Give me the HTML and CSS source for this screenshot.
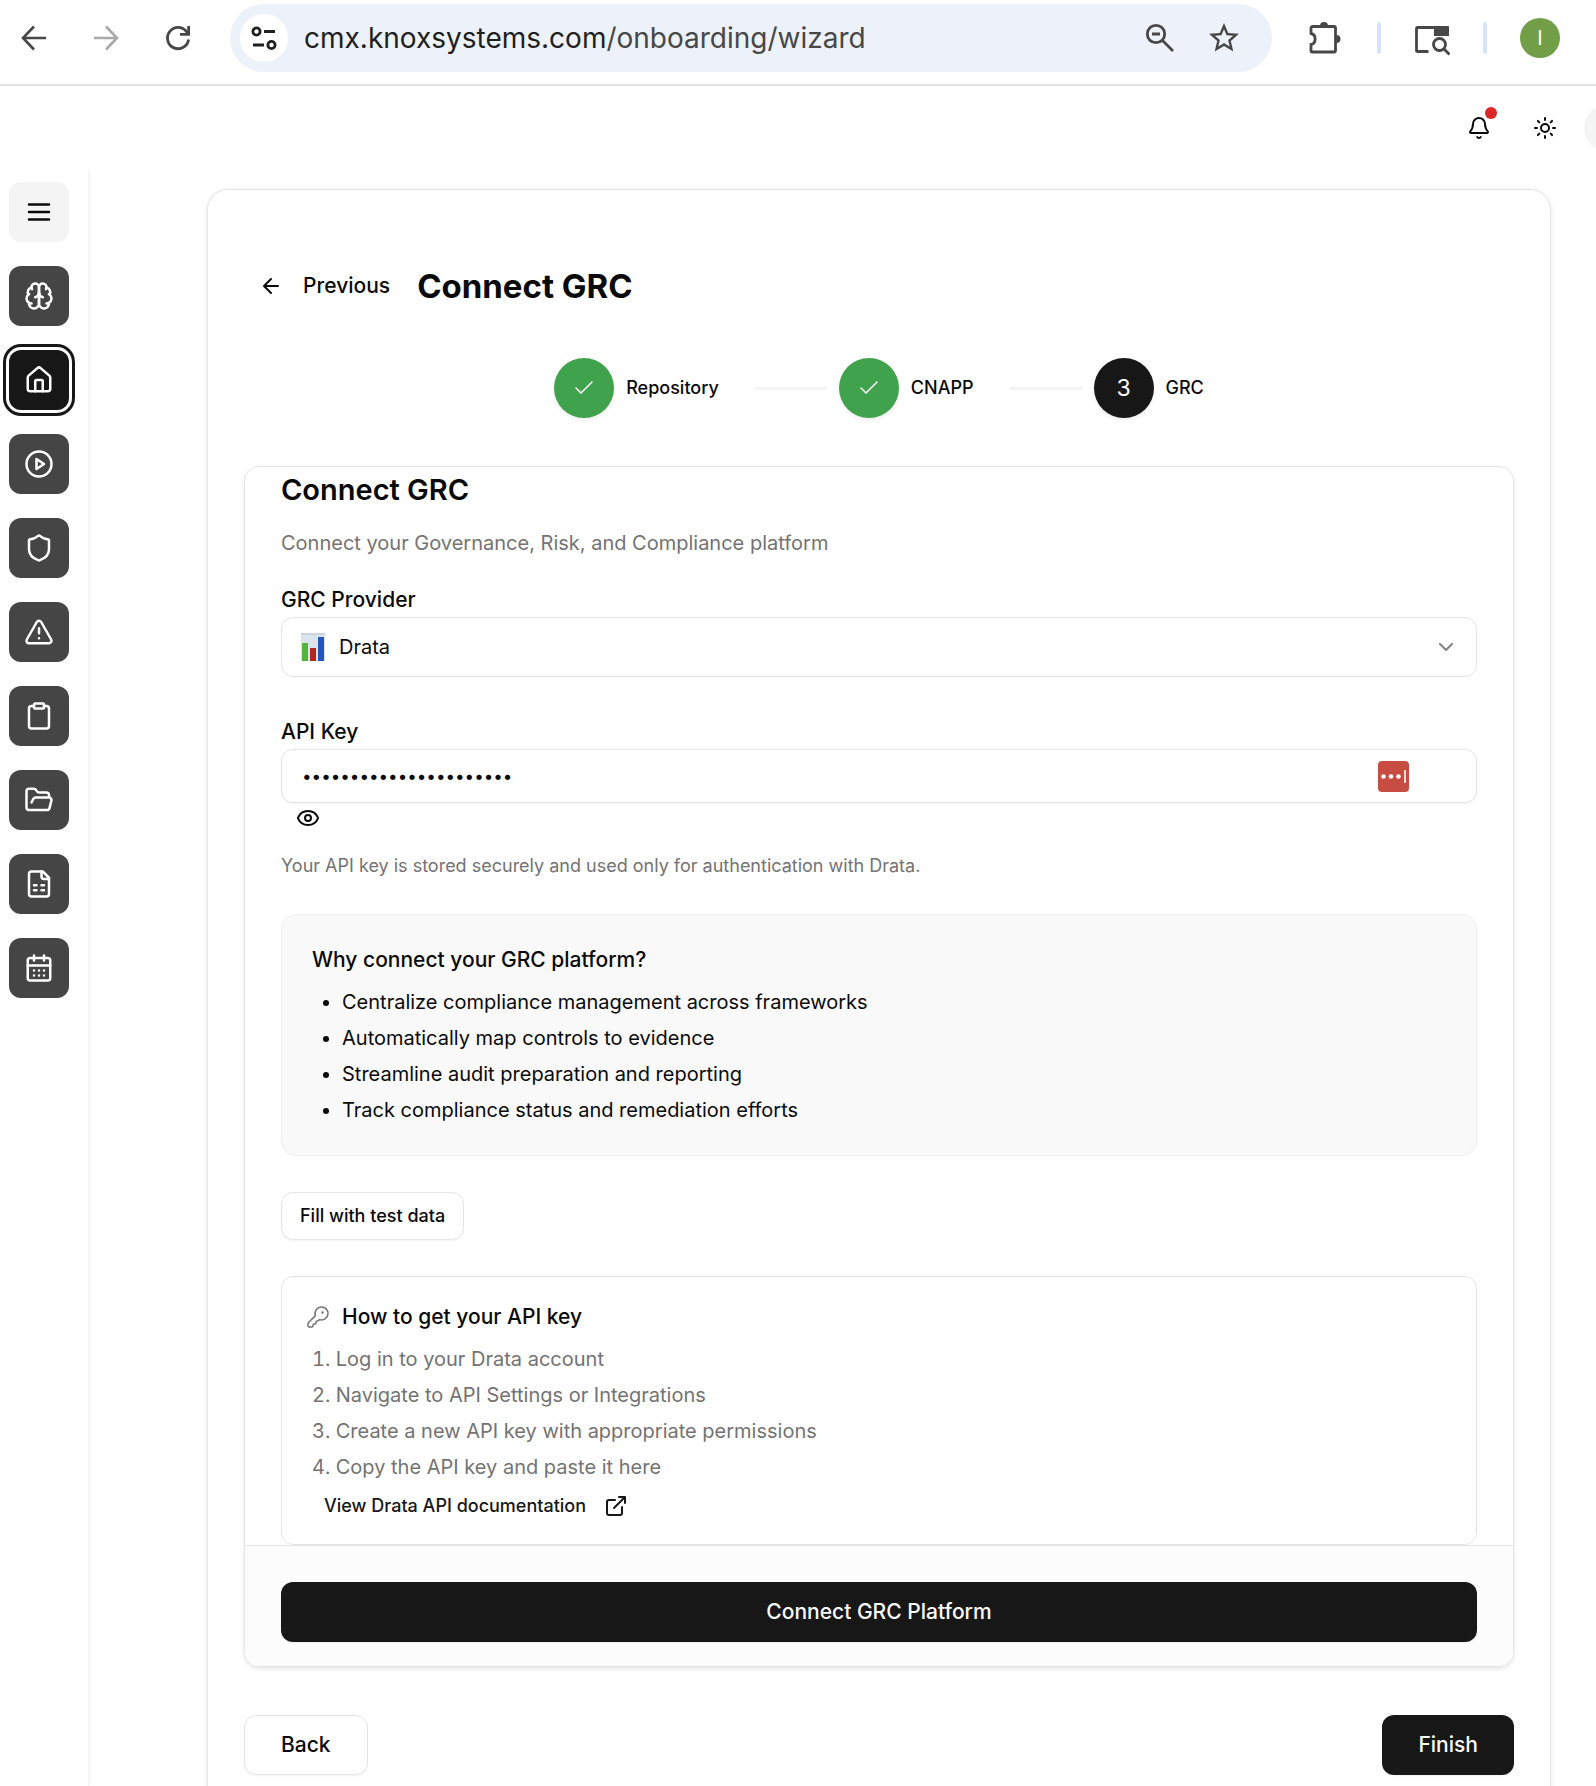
FILE: index.html
```html
<!DOCTYPE html>
<html lang="en">
<head>
<meta charset="utf-8">
<meta name="viewport" content="width=device-width, initial-scale=1">
<title>Connect GRC</title>
<link rel="stylesheet" href="styles.css">
</head>
<body>
<div class="browser">
  <button class="nav-btn" type="button" aria-label="Back"><svg width="36" height="36" viewBox="0 0 36 36" fill="none" stroke="#474747" stroke-width="2.6"><path d="M30 18H8M18 6.500L7 18l11 11.500"/></svg></button>
  <button class="nav-btn" type="button" aria-label="Forward"><svg width="36" height="36" viewBox="0 0 36 36" fill="none" stroke="#a9a9a9" stroke-width="2.6"><path d="M6 18h22M18 6.500L29 18 18 29.500"/></svg></button>
  <button class="nav-btn" type="button" aria-label="Reload"><svg width="36" height="36" viewBox="0 0 36 36" fill="none" stroke="#474747" stroke-width="2.8"><path d="M28.600 19.500A10.600 10.600 0 1 1 26.500 11.600L28 13.500"/><path d="M28.600 6v8.400H20"/></svg></button>
  <div class="omnibox">
    <button class="site-info" type="button" aria-label="Site information"><svg width="28" height="28" viewBox="0 0 28 28" fill="none" stroke="#1f1f1f" stroke-width="2.800"><circle cx="6.500" cy="7.500" r="3.600"/><path d="M14 7.500h11M3 21h11"/><circle cx="21.500" cy="21" r="3.600"/></svg></button>
    <div class="url">cmx.knoxsystems.com<span class="path">/onboarding/wizard</span></div>
    <button class="omni-btn" type="button" aria-label="Zoom"><svg width="36" height="36" viewBox="0 0 36 36" fill="none" stroke="#474747" stroke-width="2.8"><circle cx="14" cy="14" r="8.700"/><path d="M20.500 20.500L31 31M10 14h8"/></svg></button>
    <button class="omni-btn" type="button" aria-label="Bookmark"><svg width="36" height="36" viewBox="0 0 24 24" fill="#474747"><path d="M22 9.240l-7.190-.620L12 2 9.190 8.630 2 9.240l5.460 4.730L5.820 21 12 17.270 18.180 21l-1.630-7.030L22 9.240zM12 15.400l-3.760 2.270 1-4.280-3.320-2.880 4.380-.380L12 6.100l1.710 4.040 4.380.380-3.320 2.880 1 4.280L12 15.400z"/></svg></button>
  </div>
  <div class="extensions">
    <button class="nav-btn" type="button" aria-label="Extensions"><svg width="36" height="36" viewBox="0 0 36 36"><path d="M4.500 6.500H26a1.500 1.500 0 0 1 1.500 1.500V30.500a1.500 1.500 0 0 1-1.500 1.500H4.500a1.500 1.500 0 0 1-1.500-1.500V24.500c5.500-1 5.500-10 0-11V8a1.500 1.500 0 0 1 1.500-1.500Z" fill="none" stroke="#474747" stroke-width="2.800"/><path d="M12 6a4 4 0 0 1 8 0zM28.500 15a4 4 0 0 1 0 8z" fill="#474747"/></svg></button>
    <span class="divider"></span>
    <button class="nav-btn" type="button" aria-label="Search tabs"><svg width="36" height="36" viewBox="0 0 36 36" fill="none" stroke="#474747" stroke-width="2.800"><path d="M14.500 31.500H3.500a1 1 0 0 1-1-1v-22a1 1 0 0 1 1-1H33"/><path d="M20 6h14a1 1 0 0 1 1 1v9H20z" fill="#474747" stroke="none"/><circle cx="25.500" cy="24.500" r="6"/><path d="M29.500 28.500l6 6"/></svg></button>
    <span class="divider"></span>
    <button class="profile" type="button">I</button>
  </div>
</div>

<header class="topbar">
  <button class="top-btn" type="button" aria-label="Notifications"><svg class="icon" viewBox="0 0 24 24"><path d="M10.268 21a2 2 0 0 0 3.464 0"/><path d="M3.262 15.326A1 1 0 0 0 4 17h16a1 1 0 0 0 .740-1.673C19.410 13.956 18 12.499 18 8A6 6 0 0 0 6 8c0 4.499-1.411 5.956-2.738 7.326"/></svg><span class="dot"></span></button>
  <button class="top-btn" type="button" aria-label="Theme"><svg class="icon" viewBox="0 0 24 24"><circle cx="12" cy="12" r="4"/><path d="M12 2v2M12 20v2M4.930 4.930l1.410 1.410M17.660 17.660l1.410 1.410M2 12h2M20 12h2M6.340 17.660l-1.410 1.410M19.070 4.930l-1.410 1.410"/></svg></button>
  <button class="user" type="button" aria-label="Account"></button>
</header>

<div class="app">
  <nav class="sidebar" aria-label="Main">
    <button class="side menu" type="button" aria-label="Menu"><svg class="icon" viewBox="0 0 24 24"><path d="M4 6h16M4 12h16M4 18h16"/></svg></button>
    <a class="side" href="#" aria-label="Insights"><svg class="icon" viewBox="0 0 24 24"><path d="M12 5a3 3 0 1 0-5.997.125 4 4 0 0 0-2.526 5.770 4 4 0 0 0 .556 6.588A4 4 0 1 0 12 18Z"/><path d="M12 5a3 3 0 1 1 5.997.125 4 4 0 0 1 2.526 5.770 4 4 0 0 1-.556 6.588A4 4 0 1 1 12 18Z"/><path d="M15 13a4.500 4.500 0 0 1-3-4 4.500 4.500 0 0 1-3 4M17.599 6.500a3 3 0 0 0 .399-1.375M6.003 5.125A3 3 0 0 0 6.401 6.500M3.477 10.896a4 4 0 0 1 .585-.396M19.938 10.500a4 4 0 0 1 .585.396M6 18a4 4 0 0 1-1.967-.516M19.967 17.484A4 4 0 0 1 18 18"/></svg></a>
    <a class="side active" href="#" aria-label="Home"><svg class="icon" viewBox="0 0 24 24"><path d="M15 21v-8a1 1 0 0 0-1-1h-4a1 1 0 0 0-1 1v8"/><path d="M3 10a2 2 0 0 1 .709-1.528l7-5.999a2 2 0 0 1 2.582 0l7 5.999A2 2 0 0 1 21 10v9a2 2 0 0 1-2 2H5a2 2 0 0 1-2-2z"/></svg></a>
    <a class="side" href="#" aria-label="Runs"><svg class="icon" viewBox="0 0 24 24"><circle cx="12" cy="12" r="10"/><path d="M10 8l6 4-6 4z"/></svg></a>
    <a class="side" href="#" aria-label="Security"><svg class="icon" viewBox="0 0 24 24"><path d="M20 13c0 5-3.500 7.500-7.660 8.950a1 1 0 0 1-.670-.010C7.500 20.500 4 18 4 13V6a1 1 0 0 1 1-1c2 0 4.500-1.200 6.240-2.720a1.170 1.170 0 0 1 1.520 0C14.510 3.810 17 5 19 5a1 1 0 0 1 1 1z"/></svg></a>
    <a class="side" href="#" aria-label="Risks"><svg class="icon" viewBox="0 0 24 24"><path d="M21.730 18l-8-14a2 2 0 0 0-3.480 0l-8 14A2 2 0 0 0 4 21h16a2 2 0 0 0 1.730-3M12 9v4M12 17h.010"/></svg></a>
    <a class="side" href="#" aria-label="Tasks"><svg class="icon" viewBox="0 0 24 24"><rect width="8" height="4" x="8" y="2" rx="1"/><path d="M16 4h2a2 2 0 0 1 2 2v14a2 2 0 0 1-2 2H6a2 2 0 0 1-2-2V6a2 2 0 0 1 2-2h2"/></svg></a>
    <a class="side" href="#" aria-label="Files"><svg class="icon" viewBox="0 0 24 24"><path d="M6 14l1.500-2.900A2 2 0 0 1 9.240 10H20a2 2 0 0 1 1.940 2.500l-1.540 6a2 2 0 0 1-1.950 1.500H4a2 2 0 0 1-2-2V5a2 2 0 0 1 2-2h3.900a2 2 0 0 1 1.690.900l.810 1.200a2 2 0 0 0 1.670.900H18a2 2 0 0 1 2 2v2"/></svg></a>
    <a class="side" href="#" aria-label="Reports"><svg class="icon" viewBox="0 0 24 24"><path d="M15 2H6a2 2 0 0 0-2 2v16a2 2 0 0 0 2 2h12a2 2 0 0 0 2-2V7Z"/><path d="M14 2v4a2 2 0 0 0 2 2h4M8 13h2M14 13h2M8 17h2M14 17h2"/></svg></a>
    <a class="side" href="#" aria-label="Calendar"><svg class="icon" viewBox="0 0 24 24"><path d="M8 2v4M16 2v4"/><rect width="18" height="18" x="3" y="4" rx="2"/><path d="M3 10h18M8 14h.010M12 14h.010M16 14h.010M8 18h.010M12 18h.010M16 18h.010"/></svg></a>
  </nav>

  <main class="main">
    <section class="wizard">
      <div class="wizard-head">
        <button class="previous" type="button"><svg class="icon" viewBox="0 0 24 24"><path d="M12 19l-7-7 7-7M19 12H5"/></svg>Previous</button>
        <h1>Connect GRC</h1>
      </div>

      <ol class="steps">
        <li class="step done"><span class="badge"><svg class="icon" viewBox="0 0 24 24"><path d="M20 6L9 17l-5-5"/></svg></span>Repository</li>
        <li class="rule" aria-hidden="true"></li>
        <li class="step done"><span class="badge"><svg class="icon" viewBox="0 0 24 24"><path d="M20 6L9 17l-5-5"/></svg></span>CNAPP</li>
        <li class="rule" aria-hidden="true"></li>
        <li class="step"><span class="badge">3</span>GRC</li>
      </ol>

      <form class="panel">
        <div class="panel-body">
          <h2>Connect GRC</h2>
          <p class="lead">Connect your Governance, Risk, and Compliance platform</p>

          <div class="field">
            <label for="provider">GRC Provider</label>
            <div class="stack">
              <select id="provider" class="control select"><option>Drata</option></select>
              <svg class="chart" viewBox="0 0 24 28"><path fill="#dbe3ec" d="M0 0h24v28H0z"/><path fill="#c9d4e0" d="M0 0h24v2H0z"/><path fill="#52b53c" d="M1 10h6v18H1z"/><path fill="#b3261e" d="M9 15h6v13H9z"/><path fill="#2456bd" d="M17 4h6v24h-6z"/></svg>
              <svg class="icon chevron" viewBox="0 0 24 24"><path d="M6 9l6 6 6-6"/></svg>
            </div>
          </div>

          <div class="field key-field">
            <label for="apikey">API Key</label>
            <div class="stack">
              <input id="apikey" class="control secret" type="password" value="abcdefghijklmnopqrstuv">
              <svg class="manager" viewBox="0 0 31 31"><rect width="31" height="31" rx="4" fill="#c74c41"/><g fill="#fff"><circle cx="5.500" cy="15.500" r="2.300"/><circle cx="13" cy="15.500" r="2.300"/><circle cx="20.500" cy="15.500" r="2.300"/><path opacity=".8" d="M26 9h2v13h-2z"/></g></svg>
            </div>
            <button class="reveal" type="button" aria-label="Show API key"><svg class="icon" viewBox="0 0 24 24"><path d="M2.062 12.348a1 1 0 0 1 0-.696 10.750 10.750 0 0 1 19.876 0 1 1 0 0 1 0 .696 10.750 10.750 0 0 1-19.876 0"/><circle cx="12" cy="12" r="3"/></svg></button>
          </div>
          <p class="hint">Your API key is stored securely and used only for authentication with Drata.</p>

          <section class="why">
            <h3>Why connect your GRC platform?</h3>
            <ul>
              <li>Centralize compliance management across frameworks</li>
              <li>Automatically map controls to evidence</li>
              <li>Streamline audit preparation and reporting</li>
              <li>Track compliance status and remediation efforts</li>
            </ul>
          </section>

          <button class="fill" type="button">Fill with test data</button>

          <section class="howto">
            <h3><svg class="icon" viewBox="0 0 24 24"><path d="M2.586 17.414A2 2 0 0 0 2 18.828V21a1 1 0 0 0 1 1h3a1 1 0 0 0 1-1v-1a1 1 0 0 1 1-1h1a1 1 0 0 0 1-1v-1a1 1 0 0 1 1-1h.172a2 2 0 0 0 1.414-.586l.814-.814a6.500 6.500 0 1 0-4-4z"/><circle cx="16.500" cy="7.500" r=".5" fill="currentColor"/></svg>How to get your API key</h3>
            <ol>
              <li>Log in to your Drata account</li>
              <li>Navigate to API Settings or Integrations</li>
              <li>Create a new API key with appropriate permissions</li>
              <li>Copy the API key and paste it here</li>
            </ol>
            <a class="docs" href="#">View Drata API documentation<svg class="icon" viewBox="0 0 24 24"><path d="M15 3h6v6M10 14L21 3M18 13v6a2 2 0 0 1-2 2H5a2 2 0 0 1-2-2V8a2 2 0 0 1 2-2h6"/></svg></a>
          </section>
        </div>
        <div class="panel-foot"><button class="primary wide" type="submit">Connect GRC Platform</button></div>
      </form>

      <div class="wizard-foot">
        <button class="back" type="button">Back</button>
        <button class="primary" type="button">Finish</button>
      </div>
    </section>
  </main>
</div>
</body>
</html>
```

FILE: styles.css
```css
* { box-sizing: border-box; }

:root {
  --ink: #0a0a0a;
  --solid: #171717;
  --muted: #737373;
  --line: #e5e5e5;
}

body {
  margin: 0;
  height: 100vh;
  overflow: hidden;
  display: flex;
  flex-direction: column;
  background: #fff;
  color: var(--ink);
  font: 400 20px/30px Inter, "Liberation Sans", sans-serif;
}

h1, h2, h3, p, ul, ol { margin: 0; padding: 0; }

button, select, input {
  font: inherit;
  color: inherit;
  margin: 0;
  padding: 0;
  border: 0;
  background: none;
}

button { display: inline-flex; align-items: center; justify-content: center; }
a { color: inherit; text-decoration: none; }
svg { display: block; flex: none; }

.icon {
  width: 24px;
  height: 24px;
  fill: none;
  stroke: currentColor;
  stroke-width: 2;
  stroke-linecap: round;
  stroke-linejoin: round;
}

/* Browser toolbar */
.browser {
  flex: none;
  display: flex;
  align-items: center;
  height: 86px;
  padding: 0 36px 8px 16px;
  border-bottom: 2px solid #e1e1e1;
}
.nav-btn { width: 36px; height: 36px; flex: none; }
.browser > .nav-btn { margin-right: 36px; }
.omnibox {
  flex: 1;
  display: flex;
  align-items: center;
  height: 68px;
  margin-left: -2px;
  padding: 0 30px 0 10px;
  border-radius: 34px;
  background: #edf2fa;
}
.site-info { width: 48px; height: 48px; border-radius: 50%; background: #fff; }
.url {
  flex: 1;
  padding-left: 16px;
  color: #1f1f1f;
  font: 400 28px/40px Inter, "Liberation Sans", sans-serif;
  white-space: nowrap;
}
.path { color: #474747; }
.omni-btn { margin-left: 28px; }
.extensions { display: flex; align-items: center; gap: 33px; padding-left: 36px; }
.divider { width: 4px; height: 32px; border-radius: 2px; background: #d7e3fb; }
.profile {
  width: 40px;
  height: 40px;
  border-radius: 50%;
  background: #739e48;
  color: #fff;
  font-size: 20px;
}

/* Application header */
.topbar {
  flex: none;
  display: flex;
  align-items: center;
  justify-content: flex-end;
  height: 84px;
  gap: 6px;
  margin-right: -36px;
}
.top-btn { position: relative; width: 60px; height: 60px; }
.dot {
  position: absolute;
  top: 9px;
  right: 12px;
  width: 12px;
  height: 12px;
  border-radius: 50%;
  background: #dc2626;
}
.user { width: 48px; height: 48px; margin-left: 3px; border-radius: 50%; background: #f4f4f4; }

.app { flex: 1; min-height: 0; display: flex; overflow: hidden; }

.sidebar {
  flex: none;
  display: flex;
  flex-direction: column;
  gap: 24px;
  width: 89px;
  padding: 12px 9px;
  border-right: 1px solid #f4f4f4;
  box-shadow: 1px 0 3px rgba(0, 0, 0, .05);
}
.side {
  display: flex;
  align-items: center;
  justify-content: center;
  width: 60px;
  height: 60px;
  border-radius: 12px;
  background: #454545;
  color: #fff;
}
.side .icon { width: 30px; height: 30px; }
.side.menu { background: #f4f4f4; color: var(--ink); }
.side.active { background: var(--solid); box-shadow: 0 0 0 3px #fff, 0 0 0 6px var(--solid); }

.main { flex: 1; min-width: 0; padding: 19px 45px 0 118px; }

.wizard {
  padding: 66px 36px 36px;
  border: 1px solid var(--line);
  border-radius: 21px;
  box-shadow: 0 1px 5px rgba(0, 0, 0, .1);
}
.wizard-head { display: flex; align-items: center; gap: 27px; height: 60px; padding-left: 15px; }
.previous { gap: 20px; font-size: 21px; font-weight: 500; }
h1 { font-size: 33px; line-height: 48px; font-weight: 700; }

.steps {
  display: flex;
  align-items: center;
  justify-content: center;
  margin: 42px 0 48px;
  list-style: none;
}
.step { display: flex; align-items: center; gap: 12px; font-size: 18px; font-weight: 500; }
.badge {
  display: flex;
  align-items: center;
  justify-content: center;
  width: 60px;
  height: 60px;
  border-radius: 50%;
  background: var(--solid);
  color: #fff;
  font-size: 23px;
  font-weight: 400;
  box-shadow: 0 2px 4px rgba(0, 0, 0, .08);
}
.badge .icon { stroke-width: 1.5; }
.done .badge { background: #40a24c; }
.rule { width: 72px; height: 3px; margin: 0 12px 0 36px; background: #f4f4f4; }

/* Form card */
.panel {
  overflow: hidden;
  border: 1px solid var(--line);
  border-radius: 15px;
  box-shadow: 0 2px 4px rgba(0, 0, 0, .1);
}
.panel-body { display: flex; flex-direction: column; padding: 0 36px; }
h2 { font-size: 29px; line-height: 45px; font-weight: 600; }
.lead { margin: 16px 0 27px; color: var(--muted); }
.field { display: flex; flex-direction: column; align-items: stretch; }
.field label { height: 32px; font-size: 21px; font-weight: 500; line-height: 30px; }
.key-field { margin-top: 40px; }
.stack { display: grid; align-items: center; }
.stack > * { grid-area: 1 / 1; }
.control {
  width: 100%;
  border: 1px solid var(--line);
  border-radius: 12px;
  background: #fff;
}
.select { height: 60px; padding-left: 57px; appearance: none; }
.chart { width: 24px; height: 28px; margin-left: 20px; pointer-events: none; }
.chevron { justify-self: end; margin-right: 19px; opacity: .5; pointer-events: none; }
.secret { height: 54px; padding: 0 20px; font-size: 17px; box-shadow: 0 1px 2px rgba(0, 0, 0, .05); }
.manager { width: 31px; height: 31px; justify-self: end; margin-right: 68px; }
.reveal { align-self: flex-start; margin: 3px 0 0 15px; }
.hint { margin: 21px 0 33px; color: var(--muted); font-size: 18px; }

.why { padding: 30px; border: 1px solid #efefef; border-radius: 15px; background: #f9f9f9; }
h3 { margin-bottom: 12px; font-size: 21px; line-height: 30px; font-weight: 500; }
.why ul, .howto ol { display: flex; flex-direction: column; gap: 6px; }
.why ul { padding-left: 30px; }

.fill {
  align-self: flex-start;
  height: 48px;
  margin: 36px 0;
  padding: 0 18px;
  border: 1px solid var(--line);
  border-radius: 12px;
  font-size: 18px;
  font-weight: 500;
  box-shadow: 0 1px 2px rgba(0, 0, 0, .05);
}

.howto { padding: 25px 24px 14px; border: 1px solid var(--line); border-radius: 12px; }
.howto h3 { display: flex; align-items: center; gap: 12px; }
.howto h3 .icon { color: var(--muted); stroke-width: 1.5; }
.howto ol { padding-left: 6px; color: var(--muted); list-style-position: inside; }
.docs {
  display: flex;
  align-items: center;
  gap: 18px;
  width: fit-content;
  height: 48px;
  padding-left: 18px;
  color: var(--solid);
  font-size: 18px;
  font-weight: 500;
}

.panel-foot { padding: 36px 36px 24px; border-top: 1px solid var(--line); background: #fcfcfc; }
.primary, .back {
  height: 60px;
  padding: 0 36px;
  border-radius: 12px;
  font-size: 21px;
  font-weight: 500;
  box-shadow: 0 1px 2px rgba(0, 0, 0, .05);
}
.primary { background: var(--solid); color: #fafafa; }
.back { border: 1px solid var(--line); }
.wide { width: 100%; }
.wizard-foot { display: flex; justify-content: space-between; margin-top: 48px; }
```
